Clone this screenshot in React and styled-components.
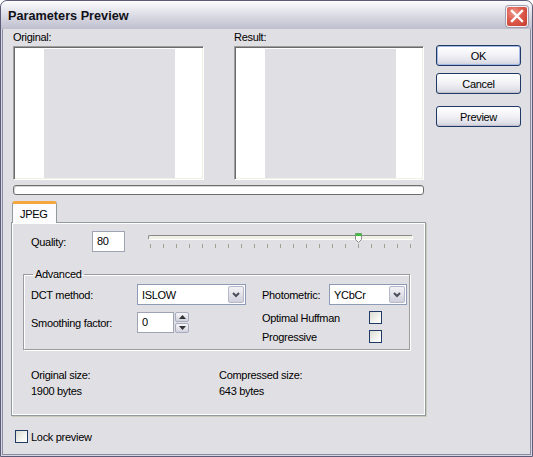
import styled, { createGlobalStyle } from "styled-components";

const GlobalStyle = createGlobalStyle`
  html, body {
    margin: 0;
    padding: 0;
    background: #ffffff;
  }
  * {
    box-sizing: border-box;
  }
  body {
    font-family: "Liberation Sans", Arial, sans-serif;
    font-size: 11px;
    letter-spacing: -0.3px;
    color: #000;
  }
`;

const ticks = Array.from({ length: 21 }, (_, i) => i);

const App = () => {
  return (
    <>
      <GlobalStyle />
      <Window>
        <TitleBar>
          <Title>Parameters Preview</Title>
          <CloseButton>
            <svg width="14" height="14" viewBox="0 0 14 14">
              <path d="M2 2 L12 12 M12 2 L2 12" stroke="#fff" strokeWidth="2.4" strokeLinecap="square" />
            </svg>
          </CloseButton>
        </TitleBar>
        <Client>
          <MainColumn>
            <PreviewRow>
              <PreviewCol>
                <Caption>Original:</Caption>
                <PreviewBox>
                  <Strip />
                  <Canvas />
                  <Strip $grow />
                </PreviewBox>
              </PreviewCol>
              <PreviewCol>
                <Caption>Result:</Caption>
                <PreviewBox>
                  <Strip />
                  <Canvas />
                  <Strip $grow />
                </PreviewBox>
              </PreviewCol>
            </PreviewRow>
            <Progress />
            <Tabs>
              <TabStrip>
                <Tab>JPEG</Tab>
              </TabStrip>
              <Panel>
                <QualityRow>
                  <Label $width={61}>Quality:</Label>
                  <TextBox $width={33}>80</TextBox>
                  <Slider>
                    <Track />
                    <Thumb>
                      <svg width="7" height="10" viewBox="0 0 7 10">
                        <path d="M0.5 0.5 H6.5 V6.5 L3.5 9.5 L0.5 6.5 Z" fill="#fbfbf8" stroke="#8c8c8c" />
                        <rect x="0.5" y="0.5" width="6" height="2.5" fill="#3cbf3c" />
                      </svg>
                    </Thumb>
                    <Ticks>
                      {ticks.map((t) => (
                        <Tick key={t} />
                      ))}
                    </Ticks>
                  </Slider>
                </QualityRow>
                <Group>
                  <Legend>Advanced</Legend>
                  <GroupGrid>
                    <FieldCol>
                      <Field>
                        <Label $width={106}>DCT method:</Label>
                        <Select $width={109}>
                          <span>ISLOW</span>
                          <DropButton>
                            <Chevron />
                          </DropButton>
                        </Select>
                      </Field>
                      <Field>
                        <Label $width={106}>Smoothing factor:</Label>
                        <TextBox $width={37}>0</TextBox>
                        <Spinner>
                          <SpinButton>
                            <svg width="7" height="4" viewBox="0 0 7 4"><path d="M0 4 L3.5 0 L7 4 Z" fill="#333" /></svg>
                          </SpinButton>
                          <SpinButton>
                            <svg width="7" height="4" viewBox="0 0 7 4"><path d="M0 0 L3.5 4 L7 0 Z" fill="#333" /></svg>
                          </SpinButton>
                        </Spinner>
                      </Field>
                    </FieldCol>
                    <FieldCol $gap={5}>
                      <Field>
                        <Label $width={67}>Photometric:</Label>
                        <Select $width={78}>
                          <span>YCbCr</span>
                          <DropButton>
                            <Chevron />
                          </DropButton>
                        </Select>
                      </Field>
                      <CheckField>
                        <Label $width={107}>Optimal Huffman</Label>
                        <Check />
                      </CheckField>
                      <CheckField>
                        <Label $width={107}>Progressive</Label>
                        <Check />
                      </CheckField>
                    </FieldCol>
                  </GroupGrid>
                </Group>
                <Sizes>
                  <SizeCol>
                    <div>Original size:</div>
                    <div>1900 bytes</div>
                  </SizeCol>
                  <SizeCol>
                    <div>Compressed size:</div>
                    <div>643 bytes</div>
                  </SizeCol>
                </Sizes>
              </Panel>
            </Tabs>
            <LockRow>
              <Check />
              <span>Lock preview</span>
            </LockRow>
          </MainColumn>
          <ButtonColumn>
            <Button $default>OK</Button>
            <Button>Cancel</Button>
            <Button $spaced>Preview</Button>
          </ButtonColumn>
        </Client>
      </Window>
    </>
  );
};

const Chevron = () => (
  <svg width="8" height="6" viewBox="0 0 8 6">
    <path d="M1 1 L4 4 L7 1" fill="none" stroke="#4d4d5a" strokeWidth="2" />
  </svg>
);

const Window = styled.div`
  width: 533px;
  height: 457px;
  display: flex;
  flex-direction: column;
  border: 1px solid #5c5c78;
  border-radius: 7px 7px 0 0;
  padding: 0 1px 1px 1px;
  background: #d7d7e2;
  overflow: hidden;
`;

const TitleBar = styled.div`
  height: 28px;
  margin: 0 -1px;
  display: flex;
  align-items: center;
  justify-content: space-between;
  padding: 0 4px 0 7px;
  border-radius: 6px 6px 0 0;
  background: linear-gradient(
    #fdfdfe 0%,
    #ececf2 25%,
    #d9d9e3 55%,
    #c8c8d6 85%,
    #bdbdcc 100%
  );
`;

const Title = styled.div`
  font-family: "Liberation Sans", Arial, sans-serif;
  font-weight: bold;
  font-size: 12.7px;
  letter-spacing: 0;
  color: #101018;
  margin-top: 1px;
`;

const CloseButton = styled.div`
  width: 22px;
  height: 21px;
  margin-top: 2px;
  border-radius: 3px;
  border: 1px solid #f4f4f8;
  box-shadow: 0 0 0 1px #a0a0b0;
  display: flex;
  align-items: center;
  justify-content: center;
  background: radial-gradient(circle at 35% 30%, #ef9a8e 0%, #dd5b4c 45%, #c43c2e 100%);
`;

const Client = styled.div`
  flex: 1;
  display: grid;
  grid-template-columns: 411px 85px;
  column-gap: 12px;
  align-items: start;
  padding: 1px 9px 0 10px;
  border: 1px solid #8b8ba4;
  border-top: none;
  background: #e0dfe3;
`;

const MainColumn = styled.div`
  display: flex;
  flex-direction: column;
`;

const PreviewRow = styled.div`
  display: grid;
  grid-template-columns: 191px 190px;
  column-gap: 30px;
`;

const PreviewCol = styled.div`
  display: flex;
  flex-direction: column;
`;

const Caption = styled.div`
  height: 14px;
  line-height: 14px;
  margin-bottom: 2px;
`;

const PreviewBox = styled.div`
  height: 134px;
  display: flex;
  border-style: solid;
  border-width: 1px;
  border-color: #9d9d9d #ffffff #ffffff #9d9d9d;
  box-shadow: inset 1px 1px 0 #6b6b6b, inset -1px -1px 0 #f1efe2;
  padding: 2px 2px 1px 2px;
  background: #ffffff;
`;

const Strip = styled.div`
  width: 28px;
  flex: ${(p) => (p.$grow ? 1 : "none")};
  background: #ffffff;
`;

const Canvas = styled.div`
  width: 131px;
  background: #e0dfe3;
`;

const Progress = styled.div`
  height: 10px;
  margin-top: 5px;
  border: 1px solid #6e6e6e;
  border-radius: 3px;
  background: #ffffff;
  box-shadow: inset 1px 1px 0 #d6d6d6;
`;

const Tabs = styled.div`
  margin: 6px -2px 0 -2px;
  display: flex;
  flex-direction: column;
`;

const TabStrip = styled.div`
  display: flex;
  padding-left: 1px;
  position: relative;
  z-index: 1;
`;

const Tab = styled.div`
  width: 45px;
  height: 22px;
  padding: 4px 0 0 7px;
  border: 1px solid #919b9c;
  border-top: 3px solid #f3a73e;
  border-bottom: none;
  border-radius: 3px 3px 0 0;
  background: #fcfcfe;
`;

const Panel = styled.div`
  height: 194px;
  margin-top: -1px;
  border: 1px solid #919b9c;
  box-shadow: inset 1px 1px 0 #ffffff, inset -1px -1px 0 #ffffff, 1px 1px 0 #c9c9bd;
  background: #e0dfe3;
  padding: 8px 0 0 19px;
  display: flex;
  flex-direction: column;
`;

const QualityRow = styled.div`
  display: flex;
  align-items: center;
  height: 21px;
`;

const Label = styled.div`
  width: ${(p) => p.$width}px;
  flex: none;
  white-space: nowrap;
`;

const TextBox = styled.div`
  width: ${(p) => p.$width}px;
  height: 21px;
  flex: none;
  border: 1px solid #9ea4b4;
  background: #ffffff;
  padding: 0 0 0 4px;
  line-height: 19px;
`;

const Slider = styled.div`
  position: relative;
  width: 265px;
  height: 21px;
  margin-left: 23px;
`;

const Track = styled.div`
  position: absolute;
  left: 0;
  right: 0;
  top: 4px;
  height: 5px;
  border-style: solid;
  border-width: 1px;
  border-color: #8a8a8a #ffffff #ffffff #8a8a8a;
  border-radius: 2px;
  background: #f1f0e6;
`;

const Thumb = styled.div`
  position: absolute;
  left: 207px;
  top: 2px;
  line-height: 0;
`;

const Ticks = styled.div`
  position: absolute;
  left: 2px;
  top: 13px;
  width: 261px;
  display: flex;
  justify-content: space-between;
`;

const Tick = styled.div`
  width: 1px;
  height: 4px;
  background: #a09f93;
`;

const Group = styled.fieldset`
  margin: 16px 0 0 -8px;
  width: 387px;
  padding: 3px 7px 6px 7px;
  border: 1px solid #9c9c9c;
  box-shadow: inset 1px 1px 0 #ffffff, 1px 1px 0 #ffffff;
  min-inline-size: auto;
`;

const Legend = styled.legend`
  padding: 0 2px;
  margin-left: 2px;
  line-height: 13px;
`;

const GroupGrid = styled.div`
  display: grid;
  grid-template-columns: 231px 1fr;
`;

const FieldCol = styled.div`
  display: flex;
  flex-direction: column;
  gap: ${(p) => p.$gap ?? 7}px;
`;

const Field = styled.div`
  display: flex;
  align-items: center;
  height: 21px;
`;

const CheckField = styled.div`
  display: flex;
  align-items: center;
  height: 13px;
  margin-top: 1px;
`;

const Select = styled.div`
  width: ${(p) => p.$width}px;
  height: 21px;
  flex: none;
  display: flex;
  align-items: center;
  justify-content: space-between;
  border: 1px solid #8d9bb6;
  background: #ffffff;
  padding: 1px 1px 1px 4px;
`;

const DropButton = styled.div`
  width: 16px;
  height: 17px;
  display: flex;
  align-items: center;
  justify-content: center;
  border: 1px solid #b4b8c8;
  border-radius: 2px;
  background: linear-gradient(#f2f2f6, #d0d0dc);
`;

const Spinner = styled.div`
  display: flex;
  flex-direction: column;
  gap: 1px;
  margin-left: 1px;
`;

const SpinButton = styled.div`
  width: 14px;
  height: 10px;
  display: flex;
  align-items: center;
  justify-content: center;
  border: 1px solid #a8acbc;
  border-radius: 2px;
  background: linear-gradient(#f6f6fa, #d2d2de);
`;

const Check = styled.div`
  width: 13px;
  height: 13px;
  flex: none;
  border: 1px solid #1f3a64;
  background: linear-gradient(135deg, #dcdcd4 0%, #f4f4f0 60%, #ffffff 100%);
`;

const Sizes = styled.div`
  margin-top: 17px;
  display: grid;
  grid-template-columns: 188px 1fr;
`;

const SizeCol = styled.div`
  line-height: 16px;
`;

const LockRow = styled.div`
  margin-top: 14px;
  margin-left: 2px;
  display: flex;
  align-items: center;
  gap: 3px;
  height: 13px;
`;

const ButtonColumn = styled.div`
  display: flex;
  flex-direction: column;
  padding-top: 15px;
`;

const Button = styled.div`
  height: 21px;
  margin-top: ${(p) => (p.$spaced ? 12 : p.$default ? 0 : 7)}px;
  display: flex;
  align-items: center;
  justify-content: center;
  border: 1px solid #1f3a64;
  border-radius: 3px;
  background: linear-gradient(#ffffff 0%, #f4f4f8 40%, #e2e2ea 80%, #cfcfdc 100%);
  box-shadow: ${(p) =>
    p.$default
      ? "inset 0 0 0 1px #a6b9e6"
      : "inset 0 -1px 0 #c2c2d0"};
`;

export default App;
